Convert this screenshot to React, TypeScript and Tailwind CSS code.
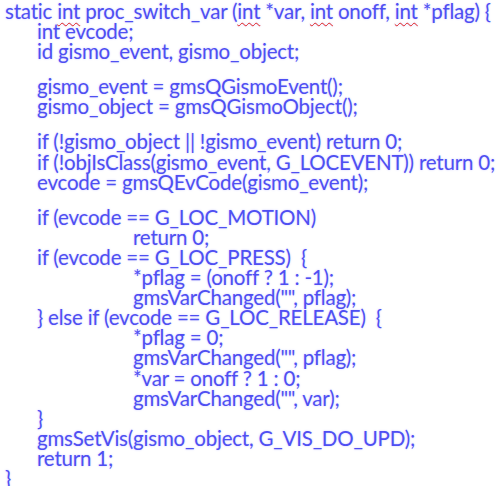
const lines: { indent: number; text: string; gap?: boolean }[] = [
  { indent: 1, text: "int evcode;" },
  { indent: 1, text: "id gismo_event, gismo_object;" },
  { indent: 1, text: "gismo_event = gmsQGismoEvent();", gap: true },
  { indent: 1, text: "gismo_object = gmsQGismoObject();" },
  { indent: 1, text: "if (!gismo_object || !gismo_event) return 0;", gap: true },
  { indent: 1, text: "if (!objIsClass(gismo_event, G_LOCEVENT)) return 0;" },
  { indent: 1, text: "evcode = gmsQEvCode(gismo_event);" },
  { indent: 1, text: "if (evcode == G_LOC_MOTION)", gap: true },
  { indent: 2, text: "return 0;" },
  { indent: 1, text: "if (evcode == G_LOC_PRESS)  {" },
  { indent: 2, text: "*pflag = (onoff ? 1 : -1);" },
  { indent: 2, text: 'gmsVarChanged("", pflag);' },
  { indent: 1, text: "} else if (evcode == G_LOC_RELEASE)  {" },
  { indent: 2, text: "*pflag = 0;" },
  { indent: 2, text: 'gmsVarChanged("", pflag);' },
  { indent: 2, text: "*var = onoff ? 1 : 0;" },
  { indent: 2, text: 'gmsVarChanged("", var);' },
  { indent: 1, text: "}" },
  { indent: 1, text: "gmsSetVis(gismo_object, G_VIS_DO_UPD);" },
  { indent: 1, text: "return 1;" },
  { indent: 0, text: "}" },
];

const indentClass = ["pl-[5px]", "pl-[37px]", "pl-[133px]"];

function Int() {
  return (
    <span className="underline decoration-wavy decoration-[#e02020] decoration-1 underline-offset-[3px]">
      int
    </span>
  );
}

export default function App() {
  return (
    <div
      className="w-[501px] h-[486px] bg-white overflow-hidden pt-[1px] text-[#4f4ff2] text-[20.5px] leading-[20.1px] tracking-[-0.2px] whitespace-pre"
      style={{
        fontFamily: "Lato, 'Open Sans', sans-serif",
        textShadow: "0 0 2px rgba(130,130,255,0.45)",
      }}
    >
      <div className={indentClass[0]}>
        static <Int /> proc_switch_var (<Int /> *var, <Int /> onoff, <Int /> *pflag) {"{"}
      </div>
      {lines.map((l, i) => (
        <div key={i} className={`${indentClass[l.indent]} ${l.gap ? "mt-[15px]" : ""}`}>
          {l.text}
        </div>
      ))}
    </div>
  );
}
